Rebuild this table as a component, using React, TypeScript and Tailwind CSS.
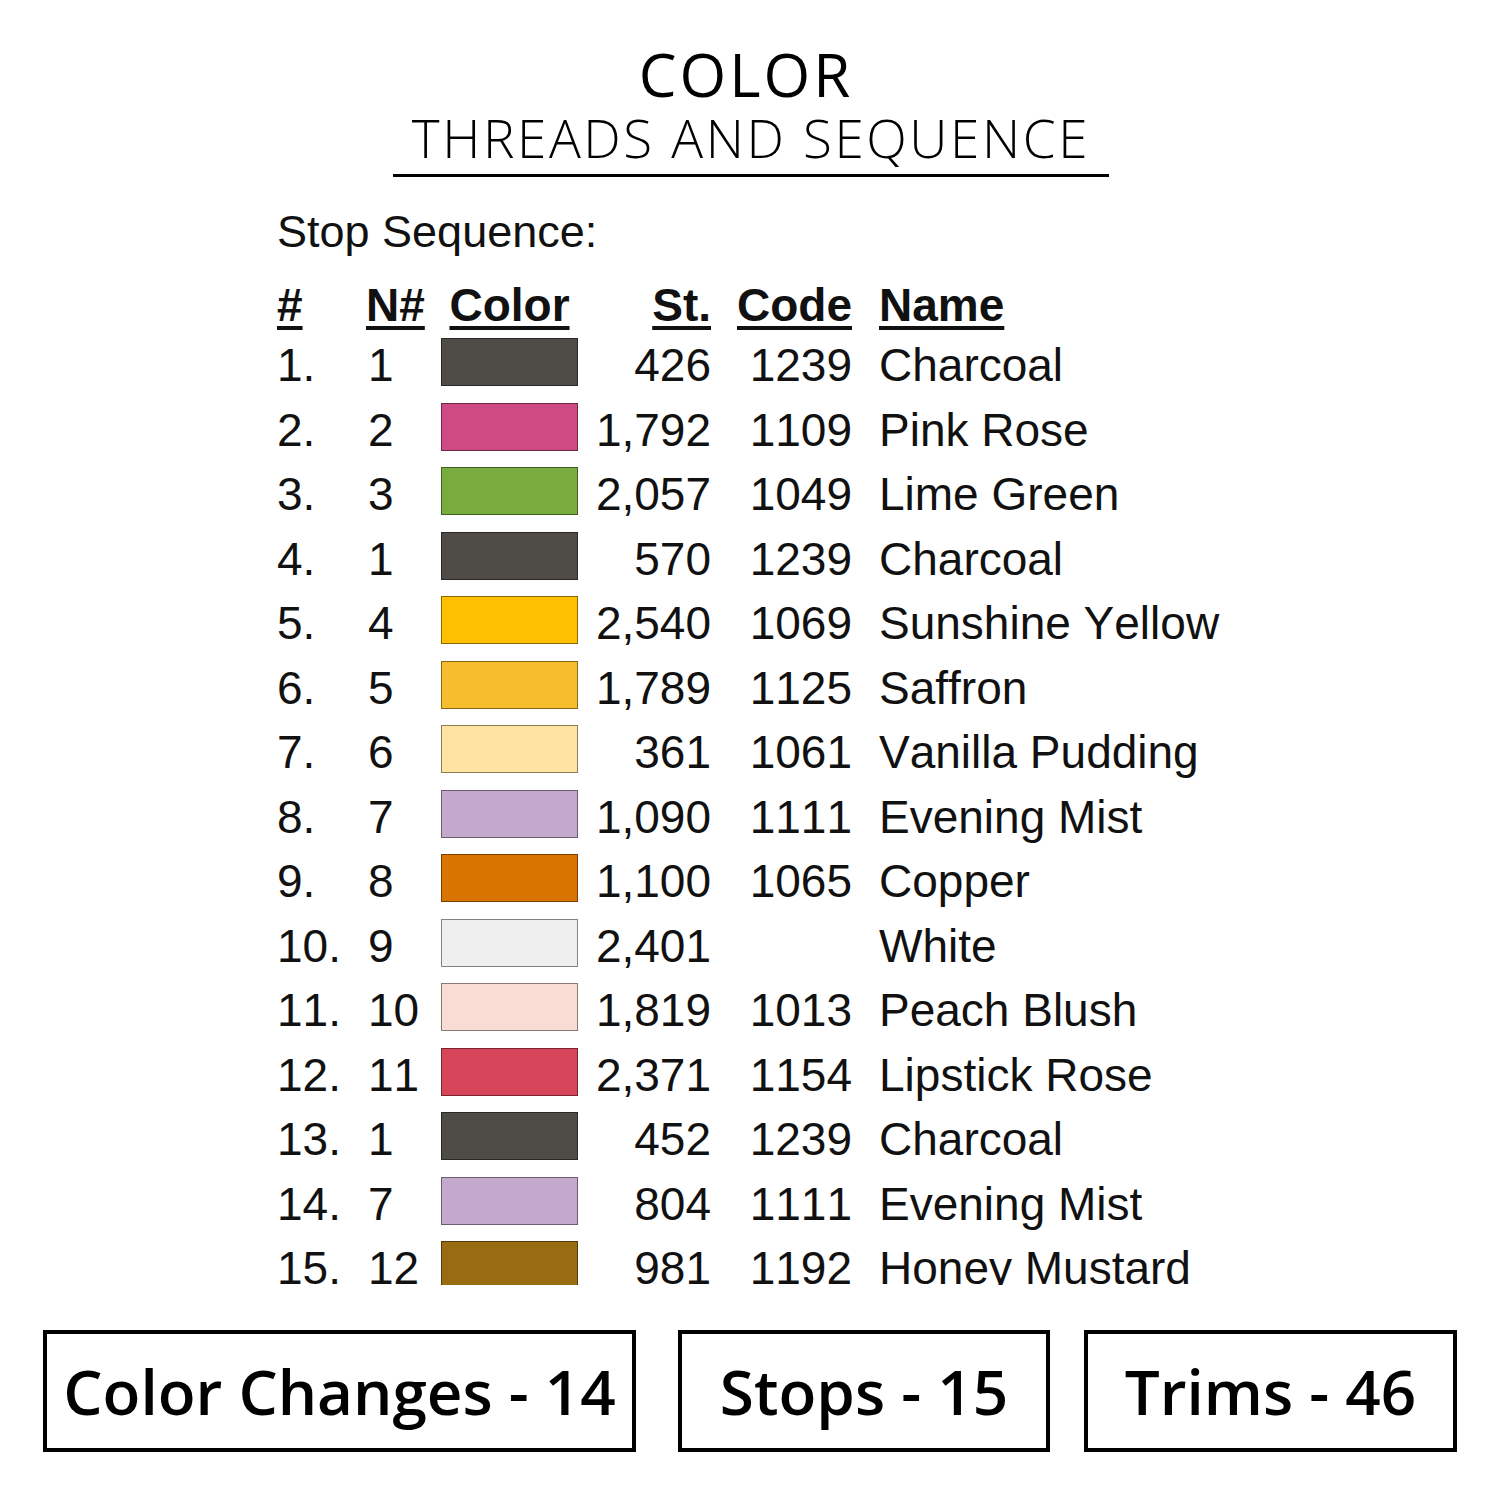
import React from "react";

type Row = { n: string; nn: string; color: string; st: string; code: string; name: string };

const rows: Row[] = [
  { n: "1.", nn: "1", color: "#4f4c47", st: "426", code: "1239", name: "Charcoal" },
  { n: "2.", nn: "2", color: "#cd4a82", st: "1,792", code: "1109", name: "Pink Rose" },
  { n: "3.", nn: "3", color: "#78ac3e", st: "2,057", code: "1049", name: "Lime Green" },
  { n: "4.", nn: "1", color: "#4f4c47", st: "570", code: "1239", name: "Charcoal" },
  { n: "5.", nn: "4", color: "#fec000", st: "2,540", code: "1069", name: "Sunshine Yellow" },
  { n: "6.", nn: "5", color: "#f8bd2e", st: "1,789", code: "1125", name: "Saffron" },
  { n: "7.", nn: "6", color: "#fee3a3", st: "361", code: "1061", name: "Vanilla Pudding" },
  { n: "8.", nn: "7", color: "#c3a9cb", st: "1,090", code: "1111", name: "Evening Mist" },
  { n: "9.", nn: "8", color: "#d97400", st: "1,100", code: "1065", name: "Copper" },
  { n: "10.", nn: "9", color: "#efefef", st: "2,401", code: "", name: "White" },
  { n: "11.", nn: "10", color: "#f9dcd3", st: "1,819", code: "1013", name: "Peach Blush" },
  { n: "12.", nn: "11", color: "#d6455a", st: "2,371", code: "1154", name: "Lipstick Rose" },
  { n: "13.", nn: "1", color: "#4f4c47", st: "452", code: "1239", name: "Charcoal" },
  { n: "14.", nn: "7", color: "#c3a9cb", st: "804", code: "1111", name: "Evening Mist" },
  { n: "15.", nn: "12", color: "#9a6c12", st: "981", code: "1192", name: "Honey Mustard" },
];

const grid = "grid grid-cols-[89px_75px_137px_133px_141px_1fr]";

export default function App() {
  return (
    <div className="w-[1500px] h-[1500px] bg-white text-black flex flex-col overflow-hidden">
      <div className="flex flex-col items-center pt-[45px] font-['Open_Sans',sans-serif]">
        <div className="text-[60px] leading-[58px] font-medium tracking-[3px] mr-[8px]">COLOR</div>
        <div className="mt-[10px] text-[53px] leading-[50px] font-light tracking-[2.6px] pl-[2px]">THREADS AND SEQUENCE</div>
        <div className="mt-[11px] h-[3px] w-[716px] bg-black ml-[2px]"></div>
      </div>

      <div className="ml-[277px] mt-[30px] h-[1078px] overflow-hidden font-['Liberation_Sans',Arial,sans-serif] text-[#111] [font-kerning:none]">
        <div className="text-[45px] leading-[50px]">Stop Sequence:</div>
        <div className={`${grid} mt-[14px] h-[62px] items-center text-[46px] font-bold underline decoration-[4px] underline-offset-[5px]`}>
          <div>#</div>
          <div>N#</div>
          <div className="text-center">Color</div>
          <div className="text-right">St.</div>
          <div className="text-right">Code</div>
          <div className="pl-[27px]">Name</div>
        </div>
        {rows.map((r, i) => (
          <div key={i} className={`${grid} h-[64.5px] items-center text-[46px] leading-[64.5px]`}>
            <div>{r.n}</div>
            <div className="pl-[2px]">{r.nn}</div>
            <div className="h-[48px] border-[1.5px] border-black/45 -translate-y-[3px]" style={{ backgroundColor: r.color }}></div>
            <div className="text-right">{r.st}</div>
            <div className="text-right">{r.code}</div>
            <div className="pl-[27px] whitespace-nowrap">{r.name}</div>
          </div>
        ))}
      </div>

      <div className="flex mt-[45px] ml-[43px] font-['Open_Sans',sans-serif] font-semibold text-[62px]">
        <div className="w-[593px] h-[122px] border-[4px] border-black flex items-center justify-center">Color Changes - 14</div>
        <div className="ml-[42px] w-[372px] h-[122px] border-[4px] border-black flex items-center justify-center">Stops - 15</div>
        <div className="ml-[34px] w-[373px] h-[122px] border-[4px] border-black flex items-center justify-center">Trims - 46</div>
      </div>
    </div>
  );
}
